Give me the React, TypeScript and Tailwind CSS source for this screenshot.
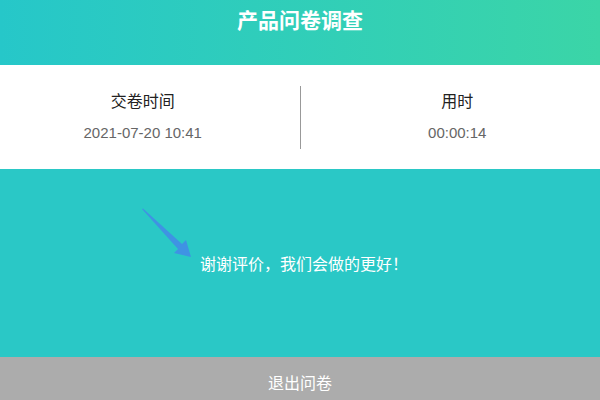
const font = { fontFamily: '"Liberation Sans", "Noto Sans CJK SC", sans-serif' };

function Arrow() {
  return (
    <svg width="54" height="54" viewBox="0 0 54 54" className="shrink-0">
      <polygon
        points="2,2 3,1.5 42,37 46,33 51,50 34,46 38,42"
        fill="#3f93e3"
      />
    </svg>
  );
}

function InfoCell({ label, value }: { label: string; value: string }) {
  return (
    <div className="flex flex-1 flex-col items-center">
      <div className="text-[16px] leading-[22px] text-[#222]">{label}</div>
      <div className="mt-[9px] text-[15px] leading-[22px] text-[#666]">{value}</div>
    </div>
  );
}

export default function App() {
  return (
    <div className="flex w-[600px] flex-col" style={font}>
      {/* header */}
      <div className="h-[65px] bg-gradient-to-r from-[#26c7c9] to-[#3bd5a7] pt-[7px] text-center">
        <h1 className="text-[21px] font-bold leading-[28px] text-white">产品问卷调查</h1>
      </div>

      {/* submit info */}
      <div className="flex h-[104px] items-center bg-white">
        <InfoCell label="交卷时间" value="2021-07-20 10:41" />
        <div className="mx-[14px] h-[63px] w-px bg-[#999]" />
        <InfoCell label="用时" value="00:00:14" />
      </div>

      {/* thanks */}
      <div className="flex h-[188px] items-start bg-[#2ac8c6] pl-[140px] pt-[38px]">
        <Arrow />
        <p className="ml-[6px] mt-[47px] text-[16px] leading-[22px] text-white">
          谢谢评价，我们会做的更好！
        </p>
      </div>

      {/* exit */}
      <button className="h-[54px] w-full bg-[#acacac] text-[16px] text-white">退出问卷</button>
    </div>
  );
}
